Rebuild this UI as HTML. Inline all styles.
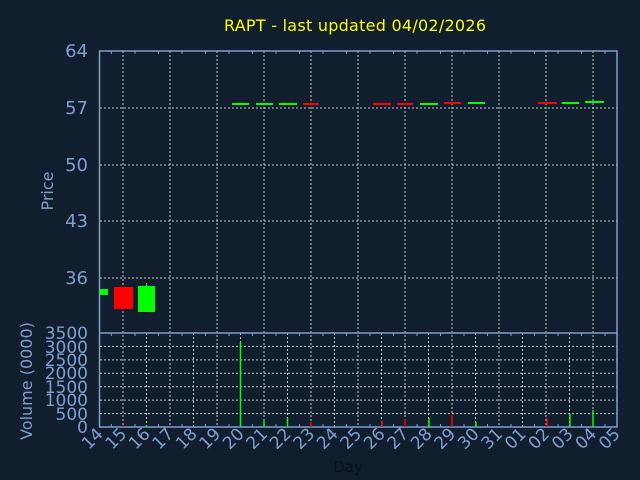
<!DOCTYPE html>
<html><head><meta charset="utf-8"><style>
html,body{margin:0;padding:0;background:#101e2e;}
svg{display:block;font-family:"DejaVu Sans","Liberation Sans",sans-serif;}
</style></head><body>
<svg width="640" height="480" viewBox="0 0 640 480" xmlns="http://www.w3.org/2000/svg">
<rect width="640" height="480" fill="#101e2e"/>
<text x="355" y="31" fill="#ffff00" font-size="16" text-anchor="middle" textLength="262">RAPT - last updated 04/02/2026</text>
<g stroke="#c8c8c8" stroke-width="1" stroke-dasharray="2,2" fill="none">
<path d="M100 108H617M100 165H617M100 221H617M100 278H617"/>
<path d="M123 51V427M170 51V427M217 51V427M264 51V427M311 51V427M358 51V427M405 51V427M452 51V427M499 51V427M546 51V427M593 51V427"/>
<path d="M100 413.6H617M100 400.1H617M100 386.7H617M100 373.3H617M100 359.9H617M100 346.4H617"/>
<path d="M146.5 333V427M193.5 333V427M240.5 333V427M287.5 333V427M334.5 333V427M381.5 333V427M428.5 333V427M475.5 333V427M522.5 333V427M569.5 333V427"/>
</g>
<g stroke="#7f9fcf" stroke-width="1.5" fill="none">
<rect x="99.5" y="51" width="517.5" height="376"/>
<path d="M99.5 333H617"/>
</g>
<g stroke="#7f9fcf" stroke-width="1">
<path d="M111.3 51v3M135 51v3M158.5 51v3M182 51v3M205.5 51v3M229 51v3M252.5 51v3M276 51v3M299.5 51v3M323 51v3M346.5 51v3M370 51v3M393.5 51v3M417 51v3M440.5 51v3M464 51v3M487.5 51v3M511 51v3M534.5 51v3M558 51v3M581.5 51v3M605 51v3"/>
<path d="M111.3 427v-3M135 427v-3M158.5 427v-3M182 427v-3M205.5 427v-3M229 427v-3M252.5 427v-3M276 427v-3M299.5 427v-3M323 427v-3M346.5 427v-3M370 427v-3M393.5 427v-3M417 427v-3M440.5 427v-3M464 427v-3M487.5 427v-3M511 427v-3M534.5 427v-3M558 427v-3M581.5 427v-3M605 427v-3"/>
<path d="M111.3 333v3M135 333v3M158.5 333v3M182 333v3M205.5 333v3M229 333v3M252.5 333v3M276 333v3M299.5 333v3M323 333v3M346.5 333v3M370 333v3M393.5 333v3M417 333v3M440.5 333v3M464 333v3M487.5 333v3M511 333v3M534.5 333v3M558 333v3M581.5 333v3M605 333v3"/>
</g>
<rect x="100" y="289" width="8" height="6" fill="#00ff00"/>
<rect x="114" y="287" width="19" height="22" fill="#ff0000"/>
<line x1="146.5" y1="283" x2="146.5" y2="287" stroke="#00ff00"/>
<rect x="138" y="286" width="17" height="26" fill="#00ff00"/>
<g fill="#00ff00">
<rect x="232" y="103" width="17" height="2"/>
<rect x="256" y="103" width="17" height="2"/>
<rect x="279" y="103" width="18" height="2"/>
<rect x="420" y="103" width="18" height="2"/>
<rect x="468" y="102" width="17" height="2"/>
<rect x="562" y="102" width="17" height="2"/>
<rect x="585" y="101" width="19" height="2"/>
</g>
<g fill="#ff0000">
<rect x="303" y="103" width="16" height="2"/>
<rect x="373" y="103" width="18" height="2"/>
<rect x="397" y="103" width="16" height="2"/>
<rect x="444" y="102" width="17" height="2"/>
<rect x="538" y="102" width="19" height="2"/>
</g>
<g stroke-width="1.5">
<line x1="240.5" y1="342" x2="240.5" y2="427" stroke="#00ff00"/>
<line x1="264" y1="421" x2="264" y2="427" stroke="#00ff00"/>
<line x1="287.5" y1="418" x2="287.5" y2="427" stroke="#00ff00"/>
<line x1="311" y1="422" x2="311" y2="427" stroke="#ff0000"/>
<line x1="146.5" y1="425" x2="146.5" y2="427" stroke="#00ff00"/>
<line x1="123" y1="425" x2="123" y2="427" stroke="#ff0000"/>
<line x1="382" y1="421" x2="382" y2="427" stroke="#ff0000"/>
<line x1="405" y1="419" x2="405" y2="427" stroke="#ff0000"/>
<line x1="429" y1="418" x2="429" y2="427" stroke="#00ff00"/>
<line x1="452" y1="415" x2="452" y2="427" stroke="#ff0000"/>
<line x1="476" y1="422" x2="476" y2="427" stroke="#00ff00"/>
<line x1="547" y1="418" x2="547" y2="427" stroke="#ff0000"/>
<line x1="570" y1="414" x2="570" y2="427" stroke="#00ff00"/>
<line x1="593" y1="410" x2="593" y2="427" stroke="#00ff00"/>
</g>
<g fill="#7f9fcf" font-size="18" text-anchor="end">
<text x="88" y="57">64</text><text x="88" y="114">57</text><text x="88" y="171">50</text><text x="88" y="227">43</text><text x="88" y="284">36</text>
</g>
<g fill="#7f9fcf" font-size="17" text-anchor="end">
<text x="88" y="339">3500</text><text x="88" y="353">3000</text><text x="88" y="366">2500</text><text x="88" y="379">2000</text><text x="88" y="393">1500</text><text x="88" y="406">1000</text><text x="88" y="420">500</text><text x="88" y="433">0</text>
</g>
<text transform="translate(53,191) rotate(-90)" fill="#7f9fcf" font-size="16" text-anchor="middle">Price</text>
<text transform="translate(32,381) rotate(-90)" fill="#7f9fcf" font-size="16" text-anchor="middle">Volume (0000)</text>
<text x="348" y="472" font-size="15" text-anchor="middle" fill="#0a0f18">Day</text>
<g fill="#7f9fcf" font-size="17" text-anchor="end">
<text transform="translate(104,435) rotate(-45)">14</text>
<text transform="translate(127.5,435) rotate(-45)">15</text>
<text transform="translate(151,435) rotate(-45)">16</text>
<text transform="translate(174.5,435) rotate(-45)">17</text>
<text transform="translate(198,435) rotate(-45)">18</text>
<text transform="translate(221.5,435) rotate(-45)">19</text>
<text transform="translate(245,435) rotate(-45)">20</text>
<text transform="translate(268.5,435) rotate(-45)">21</text>
<text transform="translate(292,435) rotate(-45)">22</text>
<text transform="translate(315.5,435) rotate(-45)">23</text>
<text transform="translate(339,435) rotate(-45)">24</text>
<text transform="translate(362.5,435) rotate(-45)">25</text>
<text transform="translate(386,435) rotate(-45)">26</text>
<text transform="translate(409.5,435) rotate(-45)">27</text>
<text transform="translate(433,435) rotate(-45)">28</text>
<text transform="translate(456.5,435) rotate(-45)">29</text>
<text transform="translate(480,435) rotate(-45)">30</text>
<text transform="translate(503.5,435) rotate(-45)">31</text>
<text transform="translate(527,435) rotate(-45)">01</text>
<text transform="translate(550.5,435) rotate(-45)">02</text>
<text transform="translate(574,435) rotate(-45)">03</text>
<text transform="translate(597.5,435) rotate(-45)">04</text>
<text transform="translate(621,435) rotate(-45)">05</text>
</g>
</svg>
</body></html>
